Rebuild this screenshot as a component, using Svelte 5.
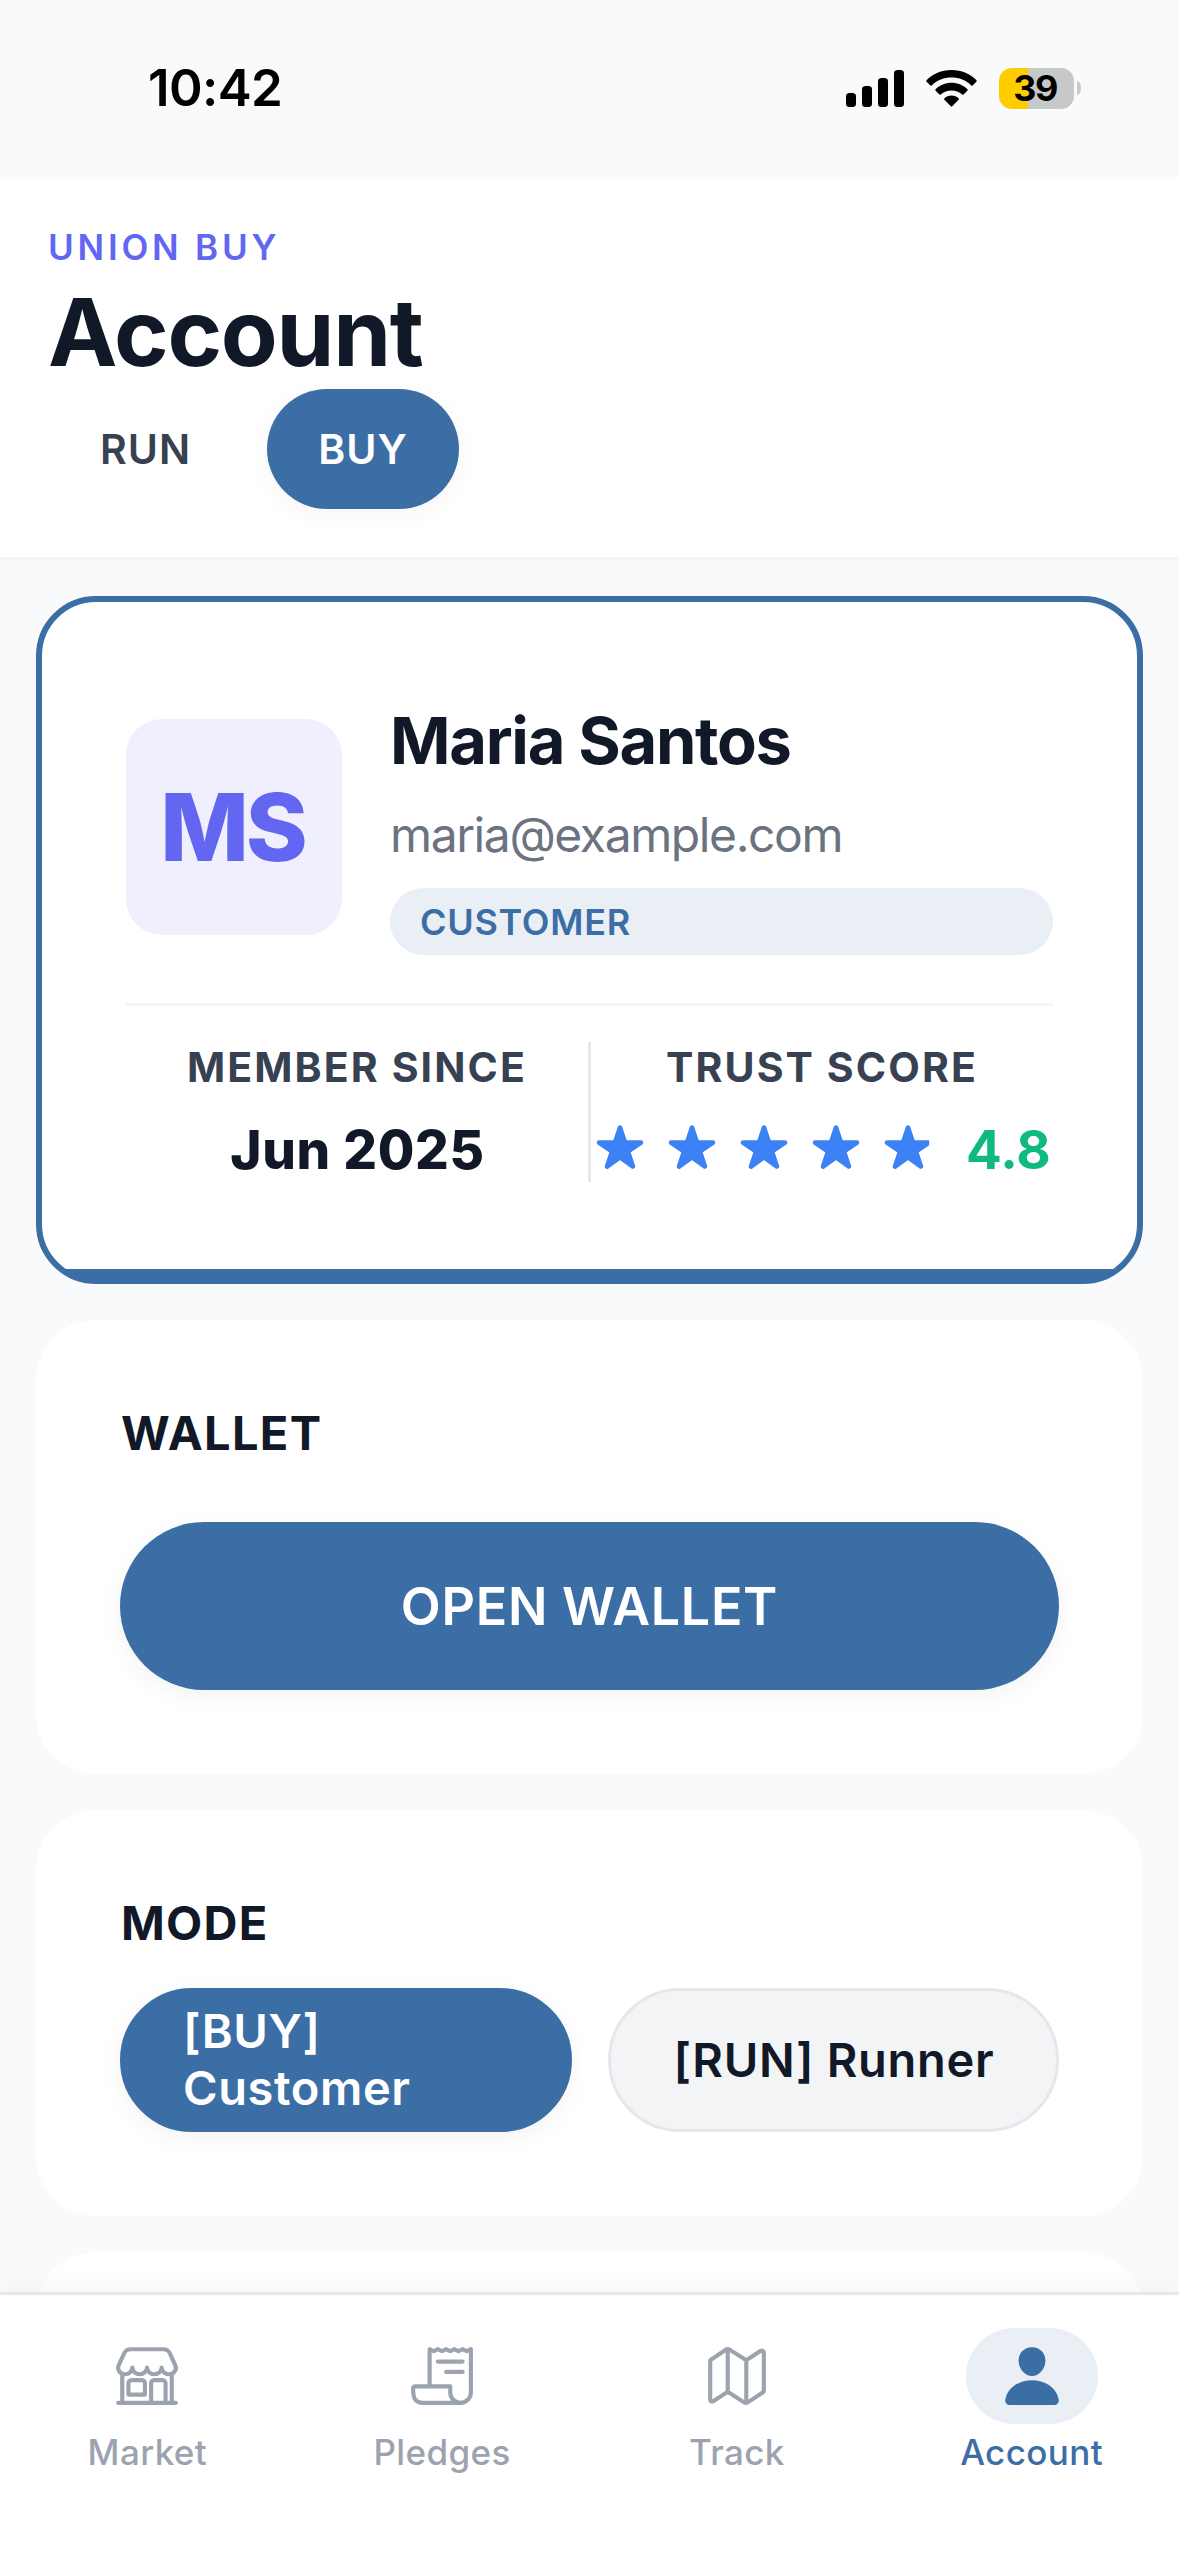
<script>
  let appMode = 'BUY';
  let activeTab = 'Account';

  const user = {
    name: 'Maria Santos',
    initials: 'MS',
    email: 'maria@example.com',
    role: 'CUSTOMER',
    since: 'Jun 2025',
    score: '4.8'
  };

  const modes = ['RUN', 'BUY'];
  const tabs = ['Market', 'Pledges', 'Track', 'Account'];
</script>

<div class="screen">
  <div class="status-bar">
    <span class="time">10:42</span>
    <div class="status-icons">
      <svg class="signal" viewBox="0 0 58 37">
        <rect x="0" y="23" width="10" height="14" rx="3.5" />
        <rect x="16" y="16" width="10" height="21" rx="3.5" />
        <rect x="32" y="8" width="10" height="29" rx="3.5" />
        <rect x="48" y="0" width="10" height="37" rx="3.5" />
      </svg>
      <svg class="wifi" viewBox="0 0 51 37">
        <path d="M25.500 0C35.500 0 44.500 4 50.500 10.300Q51 11 50.400 11.700L46.600 15.500Q46 16 45.300 15.400C40 10.200 33 7.600 25.500 7.600S11 10.200 5.700 15.400Q5 16 4.400 15.500L.6 11.700Q0 11 .5 10.300C6.500 4 15.500 0 25.500 0Z" />
        <path d="M25.500 12.800C31.700 12.800 37.300 15.200 41.400 19.300Q42 20 41.400 20.700L37.500 24.500Q36.800 25 36.200 24.500C33.200 21.800 29.500 20.400 25.500 20.400S17.800 21.800 14.800 24.500Q14.200 25 13.500 24.500L9.600 20.700Q9 20 9.600 19.300C13.700 15.200 19.300 12.800 25.500 12.800Z" />
        <path d="M25.500 25.600C28.200 25.600 30.700 26.600 32.600 28.300Q33.300 29 32.600 29.800L26.200 36.300Q25.500 37 24.800 36.300L18.400 29.800Q17.700 29 18.400 28.300C20.300 26.600 22.800 25.600 25.500 25.600Z" />
      </svg>
      <div class="battery"><span>39</span></div>
      <div class="battery-cap"></div>
    </div>
  </div>

  <header>
    <div class="brand">UNION BUY</div>
    <h1>Account</h1>
    <div class="switch">
      {#each modes as mode}
        <button class="switch-item" class:on={mode === appMode} on:click={() => (appMode = mode)}>{mode}</button>
      {/each}
    </div>
  </header>

  <main>
    <section class="card profile">
      <div class="profile-top">
        <div class="avatar">{user.initials}</div>
        <div class="info">
          <div class="name">{user.name}</div>
          <div class="email">{user.email}</div>
          <div class="role">{user.role}</div>
        </div>
      </div>
      <div class="stats">
        <div class="stat">
          <div class="label">MEMBER SINCE</div>
          <div class="value">{user.since}</div>
        </div>
        <div class="divider"></div>
        <div class="stat">
          <div class="label">TRUST SCORE</div>
          <div class="value rating">
            {#each Array(5) as _}
              <svg class="star" viewBox="0 0 512 512">
                <path d="M394 480a16 16 0 01-9.390-3L256 383.760 127.390 477a16 16 0 01-24.550-18.080L153 310.350 23 221.200a16 16 0 019-29.200h160.380l48.400-148.950a16 16 0 0130.440 0l48.400 149H480a16 16 0 019.050 29.200L359 310.350l50.130 148.530A16 16 0 01394 480z" />
              </svg>
            {/each}
            <span class="score">{user.score}</span>
          </div>
        </div>
      </div>
    </section>

    <section class="card">
      <h2>WALLET</h2>
      <button class="open-wallet">OPEN WALLET</button>
    </section>

    <section class="card">
      <h2>MODE</h2>
      <div class="mode-row">
        <button class="mode" class:selected={appMode === 'BUY'} on:click={() => (appMode = 'BUY')}>[BUY] Customer</button>
        <button class="mode" class:selected={appMode === 'RUN'} on:click={() => (appMode = 'RUN')}>[RUN] Runner</button>
      </div>
    </section>

    <section class="card next"></section>
  </main>

  <nav>
    {#each tabs as tab}
      <button class="tab" class:active={tab === activeTab} on:click={() => (activeTab = tab)}>
        <span class="tab-icon">
          <svg viewBox="0 0 512 512">
            {#if tab === 'Market'}
              <path d="M448 448V240M64 240v208M382.470 48H129.530c-21.790 0-41.470 12-49.930 30.460L36.300 173c-14.580 31.810 9.630 67.850 47.190 69h2c31.400 0 56.850-25.180 56.850-52.230 0 27 25.460 52.230 56.860 52.230s56.800-23.380 56.800-52.230c0 27 25.450 52.230 56.850 52.230s56.860-23.380 56.860-52.230c0 28.850 25.450 52.230 56.850 52.230h1.950c37.560-1.170 61.770-37.210 47.190-69l-43.300-94.540C423.940 60 404.260 48 382.470 48zM32 464h448M136 288h80a24 24 0 0124 24v88H112v-88a24 24 0 0124-24zM288 464V312a24 24 0 0124-24h64a24 24 0 0124 24v152" />
            {:else if tab === 'Pledges'}
              <path d="M160 336V48l32 16 32-16 31.940 16 32.370-16L320 64l31.790-16 31.930 16L416 48l32.010 16L480 48v224" />
              <path d="M480 272v112a80 80 0 01-80 80h0a80 80 0 01-80-80v-48H48a15.860 15.860 0 00-16 16c0 64 6.740 112 80 112h288M224 144h192M288 224h128" />
            {:else if tab === 'Track'}
              <path d="M313.270 124.640L198.730 51.360a32 32 0 00-29.280.350L56.510 127.490A16 16 0 0048 141.630v295.800a16 16 0 0023.490 14.140l97.820-63.790a32 32 0 0129.500-.240l111.860 73a32 32 0 0029.270-.110l115.430-75.940a16 16 0 008.630-14.200V74.570a16 16 0 00-23.490-14.140l-98 63.860a32 32 0 01-29.750.350zM328 128v336M184 48v336" />
            {:else}
              <path class="solid" d="M332.640 64.580C313.180 43.570 286 32 256 32c-30.160 0-57.430 11.500-76.800 32.380-19.580 21.110-29.120 49.800-26.880 80.780C156.760 206.280 203.270 256 256 256s99.160-49.710 103.670-110.820c2.270-30.700-7.330-59.330-27.030-80.600zM432 480H80a31 31 0 01-24.200-11.130c-6.500-7.770-9.120-18.380-7.180-29.110C57.060 392.940 83.400 353.610 124.800 326c36.780-24.510 83.370-38 131.200-38s94.420 13.500 131.200 38c41.400 27.600 67.740 66.930 76.180 113.750 1.940 10.730-.680 21.340-7.180 29.110A31 31 0 01432 480z" />
            {/if}
          </svg>
        </span>
        <span class="tab-label">{tab}</span>
      </button>
    {/each}
  </nav>
</div>

<style>
  :global(body) {
    margin: 0;
  }

  .screen {
    width: 1179px;
    height: 2556px;
    display: flex;
    flex-direction: column;
    overflow: hidden;
    background: #f9fafc;
    color: #111827;
    font-family: Inter, "Liberation Sans", sans-serif;
  }

  h1, h2 {
    margin: 0;
  }

  button {
    margin: 0;
    padding: 0;
    border: none;
    background: none;
    font-family: inherit;
    cursor: pointer;
  }

  /* status bar */
  .status-bar {
    flex: none;
    height: 176px;
    padding: 0 98px 1px 148px;
    display: flex;
    align-items: center;
    justify-content: space-between;
    color: #000;
  }

  .time {
    font-size: 51px;
    font-weight: 600;
    line-height: 60px;
    letter-spacing: -0.6px;
  }

  .status-icons {
    display: flex;
    align-items: center;
  }

  .signal {
    width: 58px;
    height: 37px;
    margin-right: 22px;
  }

  .wifi {
    width: 51px;
    height: 37px;
    margin-right: 22px;
  }

  .battery {
    width: 75px;
    height: 41px;
    border-radius: 13px;
    background: linear-gradient(90deg, #ffcc00 29px, #c7c8c8 29px);
    text-align: center;
    text-indent: -3px;
    font-size: 36px;
    font-weight: 700;
    line-height: 41px;
    letter-spacing: -1.5px;
  }

  .battery-cap {
    width: 4px;
    height: 14px;
    margin-left: 3px;
    border-radius: 0 4px 4px 0 / 0 7px 7px 0;
    background: #c7c8c8;
  }

  /* header */
  header {
    flex: none;
    padding: 48px 48px 48px;
    background: #fff;
    border-bottom: 3px solid #f1f3f5;
  }

  .brand {
    color: #6366f1;
    font-size: 35px;
    font-weight: 600;
    line-height: 45px;
    letter-spacing: 3.8px;
  }

  h1 {
    margin-top: 5px;
    font-size: 93px;
    font-weight: 700;
    line-height: 114px;
    letter-spacing: -1.3px;
  }

  .switch {
    display: flex;
    gap: 24px;
  }

  .switch-item {
    width: 195px;
    height: 120px;
    padding-bottom: 1px;
    border-radius: 60px;
    color: #374151;
    font-size: 41px;
    font-weight: 600;
    letter-spacing: 1px;
  }

  .switch-item.on {
    width: 192px;
    background: #3b6ea5;
    color: #fff;
    box-shadow: 0 6px 24px rgba(0, 0, 0, 0.04);
  }

  /* cards */
  main {
    flex: 1;
    min-height: 0;
    padding: 36px 36px 0;
    display: flex;
    flex-direction: column;
    gap: 36px;
    overflow: hidden;
  }

  .card {
    flex: none;
    box-sizing: border-box;
    padding: 84px;
    border-radius: 60px;
    background: #fff;
  }

  /* the gradient thickens the bottom edge in a straight line */
  .profile {
    height: 688px;
    padding-top: 97px;
    border: 6px solid #3b6ea5;
    background: linear-gradient(to top, #3b6ea5 15px, #fff 15px) border-box;
  }

  .profile-top {
    display: flex;
    align-items: center;
    gap: 48px;
    padding-bottom: 48px;
    border-bottom: 3px solid #f3f4f6;
  }

  .avatar {
    flex: none;
    width: 216px;
    height: 216px;
    border-radius: 36px;
    background: #efeffe;
    color: #6366f1;
    text-align: center;
    text-indent: -3px;
    font-size: 94px;
    font-weight: 800;
    line-height: 216px;
    letter-spacing: -3px;
  }

  .info {
    flex: 1;
  }

  .name {
    font-size: 65px;
    font-weight: 700;
    line-height: 83px;
    letter-spacing: -1.3px;
  }

  .email {
    margin: 23px 0;
    color: #6b7280;
    font-size: 48px;
    line-height: 60px;
    letter-spacing: -1.4px;
  }

  .role {
    padding: 0 30px;
    border-radius: 34px;
    background: #eaeff6;
    color: #3b6ea5;
    font-size: 36px;
    font-weight: 600;
    line-height: 68px;
    height: 67px;
    letter-spacing: 0.7px;
  }

  .stats {
    display: grid;
    grid-template-columns: 1fr 3px 1fr;
    padding-top: 36px;
  }

  .divider {
    background: #e5e7eb;
  }

  .stat {
    text-align: center;
    white-space: nowrap;
  }

  .label {
    color: #374151;
    font-size: 41px;
    font-weight: 700;
    line-height: 50px;
    letter-spacing: 2.1px;
  }

  .value {
    margin-top: 26px;
    padding-left: 1px;
    font-size: 53px;
    font-weight: 800;
    line-height: 64px;
    letter-spacing: 0.7px;
  }

  .rating {
    display: flex;
    align-items: center;
    justify-content: center;
    padding-left: 3px;
    color: #10b981;
  }

  .star {
    flex: none;
    width: 48px;
    height: 48px;
    margin: 0 24px 7px 0;
    fill: #3b82f6;
    stroke: #3b82f6;
    stroke-width: 18;
    stroke-linejoin: round;
    overflow: visible;
  }

  .star:nth-child(5) {
    clip-path: inset(-4px 3px -4px -4px);
  }

  .score {
    margin-left: 10px;
    font-weight: 700;
    letter-spacing: 0;
  }

  h2 {
    padding-left: 1px;
    font-size: 47px;
    font-weight: 700;
    line-height: 58px;
    letter-spacing: 1.3px;
  }

  .open-wallet {
    display: block;
    width: 100%;
    height: 168px;
    margin-top: 60px;
    border-radius: 84px;
    background: #3b6ea5;
    color: #fff;
    font-size: 52px;
    font-weight: 600;
    letter-spacing: 0.7px;
    box-shadow: 0 6px 24px rgba(0, 0, 0, 0.05);
  }

  .mode-row {
    display: grid;
    grid-template-columns: 1fr 1fr;
    gap: 36px;
    margin-top: 36px;
  }

  .mode {
    box-sizing: border-box;
    height: 144px;
    padding: 0 60px 1px 63px;
    border: 3px solid #e5e7eb;
    border-radius: 72px;
    background: #f3f4f6;
    color: #111827;
    text-align: left;
    font-size: 47px;
    font-weight: 600;
    line-height: 57px;
    letter-spacing: 0.7px;
  }

  .mode.selected {
    padding: 0 60px 2px;
    border-color: #3b6ea5;
    background: #3b6ea5;
    color: #fff;
    letter-spacing: 0.6px;
    box-shadow: 0 6px 24px rgba(0, 0, 0, 0.05);
  }

  .next {
    height: 300px;
  }

  /* tab bar */
  nav {
    position: relative;
    flex: none;
    box-sizing: border-box;
    height: 264px;
    padding-top: 33px;
    display: grid;
    grid-template-columns: repeat(4, 1fr);
    align-items: start;
    border-top: 3px solid #e5e7eb;
    background: #fff;
    box-shadow: 0 -6px 24px rgba(0, 0, 0, 0.03);
  }

  .tab {
    display: flex;
    flex-direction: column;
    align-items: center;
    color: #9ca3af;
  }

  .tab-icon {
    width: 132px;
    height: 96px;
    border-radius: 48px;
    display: flex;
    align-items: center;
    justify-content: center;
  }

  .tab-icon svg {
    width: 66px;
    height: 66px;
    fill: none;
    stroke: currentColor;
    stroke-width: 32;
    stroke-linecap: round;
    stroke-linejoin: round;
  }

  .tab-icon .solid {
    fill: currentColor;
    stroke: none;
  }

  .tab-label {
    margin-top: 7px;
    font-size: 35px;
    font-weight: 500;
    line-height: 42px;
    letter-spacing: 0.4px;
  }

  .active {
    color: #3b6ea5;
  }

  .active .tab-icon {
    background: #eaeff6;
  }
</style>
